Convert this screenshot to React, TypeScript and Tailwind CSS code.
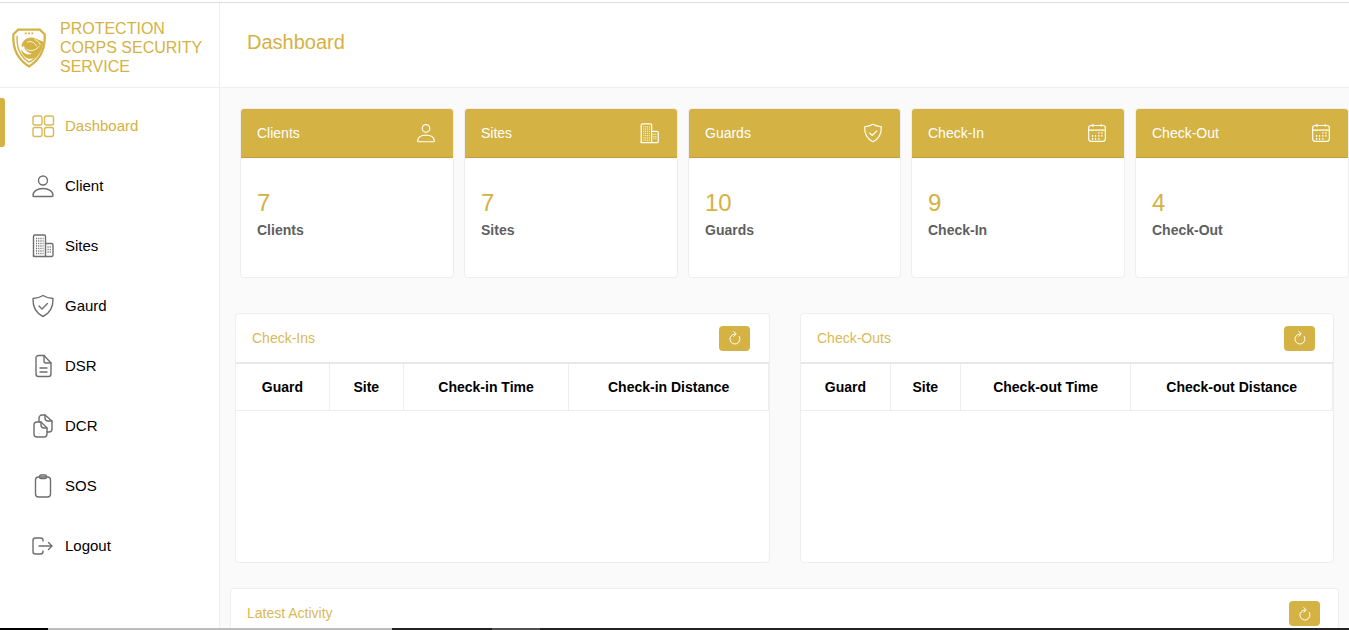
import type { ReactNode } from "react";

const sans = "font-['Liberation_Sans',Arial,sans-serif]";

function Svg({ size = 24, className = "", children }: { size?: number; className?: string; children: ReactNode }) {
  return (
    <svg width={size} height={size} viewBox="0 0 24 24" fill="none" stroke="currentColor" strokeWidth="1.4" strokeLinecap="round" strokeLinejoin="round" className={className}>
      {children}
    </svg>
  );
}

const GridIcon = ({ size }: { size?: number }) => (
  <Svg size={size}>
    <rect x="2" y="2" width="9" height="9" rx="2" />
    <rect x="13.5" y="2" width="9" height="9" rx="2" />
    <rect x="2" y="13.5" width="9" height="9" rx="2" />
    <rect x="13.5" y="13.5" width="9" height="9" rx="2" />
  </Svg>
);

const UserIcon = ({ size }: { size?: number }) => (
  <Svg size={size}>
    <circle cx="12" cy="6.5" r="4.5" />
    <path d="M2 21.5c0-4.5 4.5-7 10-7s10 2.500 10 7c0 .6-.4 1-1 1H3c-.6 0-1-.4-1-1z" />
  </Svg>
);

const BuildingIcon = ({ size }: { size?: number }) => (
  <Svg size={size}>
    <path d="M2.500 22.500V2.500a1.500 1.500 0 0 1 1.500-1.500h9a1.500 1.500 0 0 1 1.500 1.500v20" />
    <path d="M14.500 9.500h6a1.500 1.500 0 0 1 1.500 1.500v10a1.500 1.500 0 0 1-1.500 1.500H4a1.500 1.500 0 0 1-1.500-1.500" />
    <path d="M5 4.500h7.500M5 7h7.500M5 9.500h7.500M5 12h7.500M5 14.500h7.500M5 17h7.500M5 19.500h7.500M16.500 13h4M16.500 15.500h4M16.500 18h4" strokeWidth="1.300" strokeDasharray="1.100 1.100" strokeLinecap="butt" />
  </Svg>
);

const ShieldIcon = ({ size }: { size?: number }) => (
  <Svg size={size}>
    <path d="M12 1.500c2.800 1.800 6 2.700 10 3 .3 8.500-2.800 14.500-10 18-7.200-3.500-10.300-9.500-10-18 4-.3 7.200-1.200 10-3z" />
    <path d="M8 12l3 3 5.500-5.500" />
  </Svg>
);

const CalendarIcon = ({ size }: { size?: number }) => (
  <Svg size={size}>
    <rect x="2" y="3" width="20" height="19" rx="3" />
    <path d="M2 8.500h20M7 1.500v2.500M17 1.500v2.500" />
    <path d="M13.500 12h1.500M17 12h1.500M6 15.500h1.500M9.500 15.500h1.500M13.500 15.500h1.500M17 15.500h1.500M6 19h1.500M9.500 19h1.500M13.500 19h1.500" strokeWidth="2" strokeLinecap="butt" />
  </Svg>
);

const DocIcon = () => (
  <Svg>
    <path d="M5 4a2.500 2.500 0 0 1 2.500-2.500H13l7 7.500v11a2.500 2.500 0 0 1-2.500 2.500h-10A2.500 2.500 0 0 1 5 20z" />
    <path d="M13 1.500V7a2 2 0 0 0 2 2h5M9 14h7M9 18h7" />
  </Svg>
);

const CopyIcon = () => (
  <Svg>
    <path d="M3 11a3 3 0 0 1 3-3h4l6 6v6a3 3 0 0 1-3 3H6a3 3 0 0 1-3-3z" />
    <path d="M10 8v3a3 3 0 0 0 3 3h3" />
    <path d="M8 8V4a3 3 0 0 1 3-3h3l7 6v8a3 3 0 0 1-3 3h-2" />
    <path d="M14 1v3a3 3 0 0 0 3 3h4" />
  </Svg>
);

const ClipboardIcon = () => (
  <Svg>
    <rect x="4.500" y="3" width="15" height="20" rx="3" />
    <rect x="8.500" y="1" width="7" height="3.500" rx="1.500" />
  </Svg>
);

const LogoutIcon = () => (
  <Svg>
    <path d="M12 7v-.5A2.500 2.500 0 0 0 9.500 4h-5A2.500 2.500 0 0 0 2 6.500v11A2.500 2.500 0 0 0 4.500 20h5a2.500 2.500 0 0 0 2.500-2.500V17" />
    <path d="M8 12h13M17.500 8.500L21 12l-3.500 3.500" />
  </Svg>
);

const RefreshIcon = () => (
  <svg width="14" height="16" viewBox="0 0 14 16" fill="none" stroke="currentColor" strokeWidth="1" strokeLinecap="round" strokeLinejoin="round">
    <path d="M7 4a5 5 0 1 0 4.300 2.500" />
    <path d="M5.800 1.500L8.300 4 5.800 6.200" />
  </svg>
);

function Logo() {
  return (
    <svg width="34" height="40" viewBox="0 0 36 42" fill="none" className="shrink-0">
      <path d="M6.500 1.500h23l5 5c1 14-3.500 26-16.500 34C5 32.500.5 20.500 1.500 6.500z" stroke="#d4b244" strokeWidth="2.400" />
      <path d="M5.500 8c-1 12 3.500 22 12.500 28 6-3 10-8 12-13" stroke="#d4b244" strokeWidth="1.500" />
      <path d="M10 18c2-6 7-9 12-8l11 4c0 8-4 15-11 18-6 2-12-3-12.500-10 2.500 5 7.500 7 11.500 5-5-1-8-4-8-8l-2.500 1z" fill="#d4b244" />
      <path d="M13.500 5.500h2M17 5.500h2M20.500 5.500h2" stroke="#d4b244" strokeWidth="1.800" />
      <path d="M16 15c4-2 8 0 10 4M15 22c4 3 10 2 14-3M24 12c3 1 5 3 6 6" stroke="#ffffff" strokeWidth="0.900" />
    </svg>
  );
}

const navItems = [
  { label: "Dashboard", icon: <GridIcon />, active: true },
  { label: "Client", icon: <UserIcon /> },
  { label: "Sites", icon: <BuildingIcon /> },
  { label: "Gaurd", icon: <ShieldIcon /> },
  { label: "DSR", icon: <DocIcon /> },
  { label: "DCR", icon: <CopyIcon /> },
  { label: "SOS", icon: <ClipboardIcon /> },
  { label: "Logout", icon: <LogoutIcon /> },
];

const stats = [
  { title: "Clients", value: "7", icon: <UserIcon size={20} /> },
  { title: "Sites", value: "7", icon: <BuildingIcon size={21} /> },
  { title: "Guards", value: "10", icon: <ShieldIcon size={20} /> },
  { title: "Check-In", value: "9", icon: <CalendarIcon size={20} /> },
  { title: "Check-Out", value: "4", icon: <CalendarIcon size={20} /> },
];

function RefreshButton() {
  return (
    <button className="flex h-[25px] w-[31px] items-center justify-center rounded-[4px] bg-[#d4b244] text-white">
      <RefreshIcon />
    </button>
  );
}

function Panel({ title, widths, columns, className }: { title: string; widths: string[]; columns: string[]; className: string }) {
  return (
    <div className={`h-[250px] overflow-hidden rounded-[4px] border border-[#eeeeee] bg-white ${className}`}>
      <div className="flex h-[50px] items-center justify-between border-b-2 border-[#e8e8e8] pl-4 pr-[18px]">
        <span className="text-[14px] text-[#d9b956]">{title}</span>
        <RefreshButton />
      </div>
      <div className="flex h-[47px] border-b border-[#eeeeee]">
        {columns.map((col, i) => (
          <div key={col} className={`flex items-center justify-center border-r border-[#eeeeee] text-[14px] font-bold text-black ${widths[i]}`}>
            {col}
          </div>
        ))}
      </div>
    </div>
  );
}

export default function App() {
  return (
    <div className={`flex h-[630px] w-[1349px] flex-col overflow-hidden bg-white ${sans}`}>
      <div className="h-[3px] shrink-0 border-b border-[#dddddd]" />
      <div className="flex min-h-0 flex-1">
        <aside className="w-[220px] shrink-0 border-r border-[#eeeeee] bg-white">
          <div className="flex h-[85px] items-center gap-[14px] border-b border-[#eeeeee] pl-[12px] pt-[5px]">
            <Logo />
            <div className="whitespace-nowrap text-[16px] leading-[19px] text-[#d4b244]">
              PROTECTION
              <br />
              CORPS SECURITY
              <br />
              SERVICE
            </div>
          </div>
          <nav className="pt-[8px]">
            {navItems.map((item) => (
              <div key={item.label} className={`relative flex h-[60px] items-center gap-[10px] pl-[31px] text-[15px] ${item.active ? "text-[#d4b244]" : "text-black"}`}>
                {item.active && <span className="absolute left-0 top-[2px] h-[49px] w-[5px] rounded-r-[3px] bg-[#d4b244]" />}
                <span className={item.active ? "text-[#d9b956]" : "text-[#6e6e6e]"}>{item.icon}</span>
                <span>{item.label}</span>
              </div>
            ))}
          </nav>
        </aside>

        <main className="min-w-0 flex-1 bg-[#fafafa]">
          <header className="flex h-[85px] items-center border-b border-[#eeeeee] bg-white pb-[6px] pl-[27px] text-[20px] text-[#d4b244]">
            Dashboard
          </header>
          <section className="grid grid-cols-[214px_214px_213px_214px_214px] gap-[10px] pl-[20px] pt-[20px]">
            {stats.map((s) => (
              <div key={s.title} className="h-[170px] overflow-hidden rounded-[4px] border border-[#eeeeee] bg-white">
                <div className="flex h-[49px] items-center justify-between border-b border-[#c29f36] bg-[#d4b244] pl-4 pr-[17px] text-white">
                  <span className="text-[14px]">{s.title}</span>
                  {s.icon}
                </div>
                <div className="pl-4 pt-[31px]">
                  <div className="text-[24px] leading-[28px] text-[#d4b244]">{s.value}</div>
                  <div className="mt-[4px] text-[14px] font-bold leading-[18px] text-[#5f5f5f]">{s.title}</div>
                </div>
              </div>
            ))}
          </section>
          <section className="mt-[35px] flex gap-[30px] pl-[15px]">
            <Panel
              title="Check-Ins"
              className="w-[535px] [&>div:first-child]:pr-[19px]"
              columns={["Guard", "Site", "Check-in Time", "Check-in Distance"]}
              widths={["w-[94px]", "w-[74px]", "w-[166px]", "w-[200px]"]}
            />
            <Panel
              title="Check-Outs"
              className="w-[534px]"
              columns={["Guard", "Site", "Check-out Time", "Check-out Distance"]}
              widths={["w-[90px]", "w-[70px]", "w-[171px]", "w-[202px]"]}
            />
          </section>
          <section className="ml-[10px] mt-[25px] h-[60px] w-[1109px] rounded-[4px] border border-[#eeeeee] bg-white">
            <div className="flex h-[49px] items-center justify-between pl-4 pr-[18px]">
              <span className="text-[14px] text-[#d9b956]">Latest Activity</span>
              <RefreshButton />
            </div>
          </section>
        </main>
      </div>
      <div className="relative z-10 flex h-[2px] shrink-0 bg-[#222222]">
        <div className="w-[48px] bg-black" />
        <div className="w-[344px] bg-[#bdbdbd]" />
        <div className="ml-[100px] w-[48px] bg-[#505050]" />
      </div>
    </div>
  );
}
